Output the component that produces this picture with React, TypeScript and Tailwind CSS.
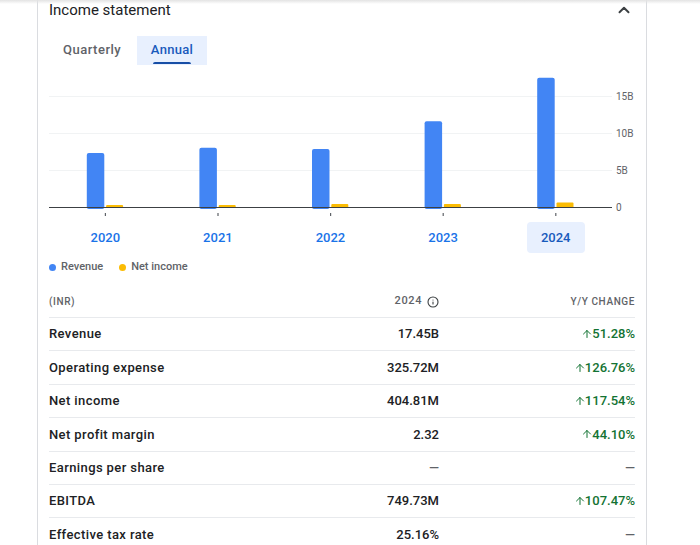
import { ArrowUp, ChevronUp, Info } from "lucide-react";

const years = [
  { year: "2020", revenue: 7.3, net: 0.25 },
  { year: "2021", revenue: 8.0, net: 0.25 },
  { year: "2022", revenue: 7.85, net: 0.4 },
  { year: "2023", revenue: 11.6, net: 0.4 },
  { year: "2024", revenue: 17.45, net: 0.6 }
];

const rows = [
  { label: "Revenue", value: "17.45B", change: "51.28%" },
  { label: "Operating expense", value: "325.72M", change: "126.76%" },
  { label: "Net income", value: "404.81M", change: "117.54%" },
  { label: "Net profit margin", value: "2.32", change: "44.10%" },
  { label: "Earnings per share", value: "—", change: null },
  { label: "EBITDA", value: "749.73M", change: "107.47%" },
  { label: "Effective tax rate", value: "25.16%", change: null }
];

const PX_PER_B = 7.4;
const BASE = 142;
const COL = 112.6;

function Chart() {
  return (
    <svg width="591" height="157" className="block">
      {[31, 68, 105].map((y) => (
        <line key={y} x1="0" x2="563" y1={y + 0.5} y2={y + 0.5} stroke="#f1f3f4" strokeWidth="1" />
      ))}
      {years.map((d, i) => {
        const c = COL * i + COL / 2;
        const rh = d.revenue * PX_PER_B;
        const nh = Math.max(2, d.net * PX_PER_B);
        return (
          <g key={d.year}>
            <rect x={c - 18.5} y={BASE - rh} width="17.5" height={rh + 2} rx="2" fill="#4285f4" />
            <rect x={c + 0.8} y={BASE - nh} width="17" height={nh + 1} rx="1" fill="#fbbc04" />
            <rect x={c - 0.5} y="148" width="1.2" height="3" fill="#5f6368" />
          </g>
        );
      })}
      <line x1="0" x2="563" y1={BASE + 0.5} y2={BASE + 0.5} stroke="#3c4043" strokeWidth="1.2" />
      {[
        { y: 31, t: "15B" },
        { y: 68, t: "10B" },
        { y: 105, t: "5B" },
        { y: 142, t: "0" }
      ].map((l) => (
        <text
          key={l.t}
          x="567"
          y={l.y + 4}
          fontSize="10"
          fill="#5f6368"
          fontFamily="Roboto, sans-serif"
        >
          {l.t}
        </text>
      ))}
    </svg>
  );
}

export default function App() {
  return (
    <div
      className="relative w-[700px] h-[545px] overflow-hidden bg-white text-[#202124]"
      style={{ fontFamily: "Roboto, 'Liberation Sans', sans-serif" }}
    >
      {/* header shadow */}
      <div className="absolute left-0 top-0 w-full h-[4px] bg-gradient-to-b from-[#e3e3e3] to-transparent" />

      <div className="ml-[37px] w-[610px] h-full border-x border-[#dadce0] pl-[11px] pr-[10px]">
        <div className="h-[20px] flex items-center justify-between">
          <span className="text-[15px] leading-none">Income statement</span>
          <ChevronUp size={18} strokeWidth={2.6} className="mr-[3px] text-[#3c4043]" />
        </div>

        {/* tabs */}
        <div className="mt-[16px] flex h-[29px]">
          <div className="w-[88px] pl-[14px] pb-[1px] flex items-center text-[13px] font-medium tracking-[0.5px] text-[#5f6368]">
            Quarterly
          </div>
          <div className="relative w-[70px] pb-[1px] flex items-center justify-center bg-[#e8f0fe] text-[13px] font-medium tracking-[0.3px] text-[#185abc]">
            Annual
            <div className="absolute bottom-[1px] left-[16px] w-[38px] h-[2px] bg-[#174ea6] rounded-t" />
          </div>
        </div>

        <Chart />

        <div className="grid grid-cols-5 w-[563px] h-[31px]">
          {years.map((d) =>
            d.year === "2024" ? (
              <div key={d.year} className="flex justify-center">
                <div className="w-[58px] h-[31px] rounded-[4px] bg-[#e8f0fe] flex items-center justify-center text-[13px] font-medium text-[#185abc]">
                  {d.year}
                </div>
              </div>
            ) : (
              <div key={d.year} className="flex items-center justify-center text-[13px] font-medium text-[#1a73e8]">
                {d.year}
              </div>
            )
          )}
        </div>

        {/* legend */}
        <div className="mt-[8px] flex items-center h-[12px] text-[11px] font-medium text-[#5f6368]">
          <span className="w-[7px] h-[7px] rounded-full bg-[#4285f4]" />
          <span className="ml-[5px]">Revenue</span>
          <span className="ml-[16px] w-[7px] h-[7px] rounded-full bg-[#fbbc04]" />
          <span className="ml-[5px]">Net income</span>
        </div>

        {/* table */}
        <div className="mt-[13px] w-[586px]">
          <div className="flex items-center h-[32px] border-b border-[#e8eaed] text-[10px] font-medium tracking-[0.6px] text-[#5f6368]">
            <div className="flex-1">(INR)</div>
            <div className="flex items-center gap-[5px] text-[11px]">
              2024
              <Info size={12} strokeWidth={2.2} className="text-[#3c4043]" />
            </div>
            <div className="w-[196px] text-right">Y/Y CHANGE</div>
          </div>
          {rows.map((r) => (
            <div
              key={r.label}
              className="flex items-center h-[33.4px] border-b border-[#e8eaed] text-[13px] font-medium"
            >
              <div className="flex-1 tracking-[0.4px]">{r.label}</div>
              <div className={r.value === "—" ? "text-[#5f6368]" : ""}>{r.value}</div>
              <div className="w-[196px] flex justify-end items-center">
                {r.change ? (
                  <span className="flex items-center text-[#137333]">
                    <ArrowUp size={12} strokeWidth={2} className="mr-[-1px]" />
                    {r.change}
                  </span>
                ) : (
                  <span className="text-[#5f6368]">—</span>
                )}
              </div>
            </div>
          ))}
        </div>
      </div>
    </div>
  );
}
